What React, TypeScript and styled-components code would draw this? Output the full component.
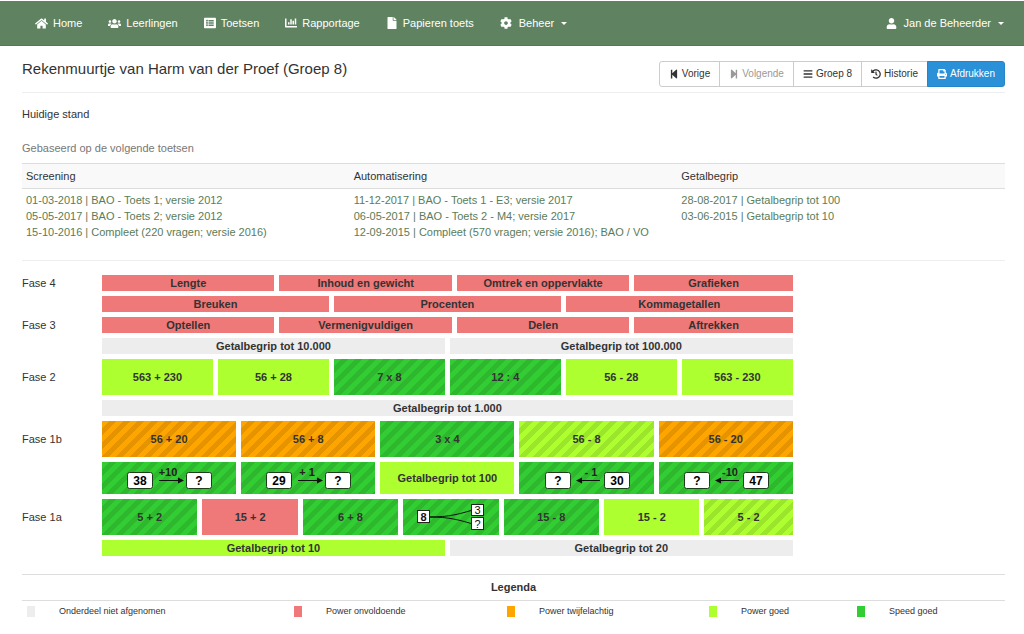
import React from 'react';
import styled, { createGlobalStyle, css } from 'styled-components';
import {
  FaBars, FaChartBar, FaCog, FaFile, FaHistory, FaHome, FaListAlt,
  FaPrint, FaStepBackward, FaStepForward, FaUser, FaUsers,
} from 'react-icons/fa';

const GlobalStyle = createGlobalStyle`
  *, *::before, *::after { box-sizing: border-box; }
  body {
    margin: 0;
    background: #fff;
    color: #333;
    font: 11px/16px "Liberation Sans", Arial, sans-serif;
  }
  h1, h2, p, ul { margin: 0; padding: 0; font-weight: normal; }
  button { font-family: inherit; cursor: pointer; }
`;

const NavBar = styled.nav`
  display: flex;
  align-items: center;
  justify-content: space-between;
  height: 46px;
  padding: 0 20px 0 35px;
  background: #5f8361;
  border-top: 1px solid #fff;
  border-bottom: 1px solid #557657;
`;

const NavList = styled.ul`
  display: flex;
  gap: 26px;
  list-style: none;
`;

const navItem = css`
  display: flex;
  align-items: center;
  gap: 5px;
  padding: 0;
  border: 0;
  background: none;
  color: #fff;
  font-size: 11px;
  line-height: 16px;
  text-decoration: none;
  white-space: nowrap;
`;

const NavLink = styled.a`${navItem}`;
const NavButton = styled.button`
  ${navItem}
  gap: 7px;
`;

const Caret = styled.span`
  border: 3px solid transparent;
  border-top-color: currentColor;
  border-bottom: 0;
`;

const Page = styled.main`
  padding: 0 19px 16px 22px;
`;

const Header = styled.header`
  display: flex;
  justify-content: space-between;
  align-items: flex-start;
  padding: 15px 0 5px;
  border-bottom: 1px solid #eee;
`;

const Title = styled.h1`
  font-size: 15px;
  line-height: 16px;
`;

const ButtonGroup = styled.div`
  display: flex;
`;

const ToolButton = styled.button<{ $primary?: boolean }>`
  display: flex;
  align-items: center;
  gap: 3px;
  height: 26px;
  padding: 0 9px;
  margin-left: -1px;
  border: 1px solid ${p => (p.$primary ? '#2485c7' : '#ccc')};
  background: ${p => (p.$primary ? '#2a90d7' : '#fff')};
  color: ${p => (p.$primary ? '#fff' : '#333')};
  font-size: 10px;
  line-height: 16px;
  &:first-child { border-radius: 3px 0 0 3px; }
  &:last-child { border-radius: 0 3px 3px 0; }
  &:disabled { color: #999; cursor: default; }
`;

const SectionTitle = styled.h2`
  padding-top: 13px;
  font-size: 11px;
`;

const Note = styled.p`
  padding: 18px 0 7px;
  color: #777;
`;

const TestTable = styled.table`
  width: 100%;
  table-layout: fixed;
  border-collapse: separate;
  border-spacing: 0;
  th {
    padding: 4px;
    border: solid #ddd;
    border-width: 1px 0;
    background: #f9f9f9;
    font-weight: normal;
    text-align: left;
  }
  td {
    padding: 3px 4px;
    vertical-align: top;
  }
`;

const TestLink = styled.a`
  display: block;
  color: #5b7c58;
  text-decoration: none;
  white-space: nowrap;
`;

const Wall = styled.section`
  display: flex;
  flex-direction: column;
  gap: 5px;
  margin-top: 17px;
  padding: 14px 0 18px;
  border-top: 1px solid #eee;
`;

const WallRow = styled.div<{ $height: number }>`
  display: grid;
  grid-template-columns: 80px minmax(0, 1fr);
  align-items: center;
  height: ${p => p.$height}px;
`;

const Bricks = styled.div<{ $columns: string }>`
  display: grid;
  grid-template-columns: ${p => p.$columns};
  gap: 5px;
  width: 76.5%;
  height: 100%;
`;

const tones = {
  none: '#ededed',
  bad: '#ef7878',
  doubt: '#ffa500',
  good: '#adff2f',
  speed: '#32cd32',
};
type Tone = keyof typeof tones;

const Brick = styled.div<{ $tone: Tone; $striped?: boolean }>`
  display: flex;
  align-items: center;
  justify-content: center;
  overflow: hidden;
  background-color: ${p => tones[p.$tone]};
  ${p => p.$striped && css`
    background-image: repeating-linear-gradient(
      135deg, transparent 0 5px, rgba(0, 0, 0, 0.1) 5px 10px
    );
  `}
  font-weight: bold;
  white-space: nowrap;
`;

const Drawing = styled.svg`
  display: block;
  flex: none;
  font-weight: bold;
`;

const Legend = styled.section`
  border-top: 1px solid #ddd;
`;

const LegendTitle = styled.h2`
  padding: 4px 0 5px;
  border-bottom: 1px solid #ddd;
  font-size: 11px;
  font-weight: bold;
  text-align: center;
`;

const LegendList = styled.ul`
  display: grid;
  grid-template-columns: 267fr 213fr 202fr 148fr 153fr;
  padding-top: 2px;
  list-style: none;
`;

const LegendItem = styled.li`
  display: flex;
  align-items: center;
  gap: 24px;
  padding-left: 5px;
  font-size: 9px;
  white-space: nowrap;
`;

const Swatch = styled.span<{ $tone: Tone }>`
  width: 8px;
  height: 11px;
  background: ${p => tones[p.$tone]};
`;

/* Two number boxes joined by a labelled arrow. */
function Jump({ left, right, step, back }: { left: string; right: string; step: string; back?: boolean }) {
  return (
    <Drawing width="88" height="32" viewBox="-2 0 88 32" textAnchor="middle">
      <g fill="#fff" stroke="#1d3d1d">
        <rect x="0.5" y="10.5" width="25" height="16" rx="2" />
        <rect x="59.5" y="10.5" width="25" height="16" rx="2" />
      </g>
      <path d={back ? 'M55 18.5H35' : 'M32 18.5H52'} stroke="#111" />
      <path d={back ? 'M31 18.5l6-3v6z' : 'M57 18.5l-6-3v6z'} fill="#111" />
      <text x="13" y="23" fontSize="12" fill="#000">{left}</text>
      <text x="72" y="23" fontSize="12" fill="#000">{right}</text>
      <text x={back ? 46 : 41} y="14" fontSize="11" fill="#222">{step}</text>
    </Drawing>
  );
}

/* One number that splits into two parts. */
function Split() {
  return (
    <Drawing width="68" height="36" viewBox="0 0 68 36" textAnchor="middle" fontSize="11">
      <path d="M13 18C32 18 42 15 54 11.5M13 18C32 18 42 21 54 24.5" fill="none" stroke="#111" />
      <g fill="#fff" stroke="#222">
        <rect x="0.5" y="11.5" width="12" height="12" />
        <rect x="54.5" y="5.5" width="12" height="11" />
        <rect x="54.5" y="18.5" width="12" height="12" />
      </g>
      <g fill="#111">
        <text x="6.5" y="21.5">8</text>
        <text x="60.5" y="15" fontWeight="normal">3</text>
        <text x="60.5" y="28.5" fontWeight="normal">?</text>
      </g>
    </Drawing>
  );
}

type BrickData = [React.ReactNode, Tone, boolean?];
interface RowData { label?: string; height: number; columns: string; bricks: BrickData[] }

const quarters = '172fr 172fr 172fr 158fr';
const equal = (n: number) => `repeat(${n}, minmax(0, 1fr))`;

const rows: RowData[] = [
  { label: 'Fase 4', height: 16, columns: quarters, bricks: [['Lengte', 'bad'], ['Inhoud en gewicht', 'bad'], ['Omtrek en oppervlakte', 'bad'], ['Grafieken', 'bad']] },
  { height: 16, columns: equal(3), bricks: [['Breuken', 'bad'], ['Procenten', 'bad'], ['Kommagetallen', 'bad']] },
  { label: 'Fase 3', height: 16, columns: quarters, bricks: [['Optellen', 'bad'], ['Vermenigvuldigen', 'bad'], ['Delen', 'bad'], ['Aftrekken', 'bad']] },
  { height: 16, columns: equal(2), bricks: [['Getalbegrip tot 10.000', 'none'], ['Getalbegrip tot 100.000', 'none']] },
  { label: 'Fase 2', height: 36, columns: equal(6), bricks: [['563 + 230', 'good'], ['56 + 28', 'good'], ['7 x 8', 'speed', true], ['12 : 4', 'speed', true], ['56 - 28', 'good'], ['563 - 230', 'good']] },
  { height: 16, columns: equal(1), bricks: [['Getalbegrip tot 1.000', 'none']] },
  { label: 'Fase 1b', height: 36, columns: equal(5), bricks: [['56 + 20', 'doubt', true], ['56 + 8', 'doubt', true], ['3 x 4', 'speed', true], ['56 - 8', 'good', true], ['56 - 20', 'doubt', true]] },
  {
    height: 32,
    columns: equal(5),
    bricks: [
      [<Jump left="38" right="?" step="+10" />, 'speed', true],
      [<Jump left="29" right="?" step="+ 1" />, 'speed', true],
      ['Getalbegrip tot 100', 'good'],
      [<Jump left="?" right="30" step="- 1" back />, 'speed', true],
      [<Jump left="?" right="47" step="-10" back />, 'speed', true],
    ],
  },
  { label: 'Fase 1a', height: 36, columns: 'repeat(6, 95fr) 88fr', bricks: [['5 + 2', 'speed', true], ['15 + 2', 'bad'], ['6 + 8', 'speed', true], [<Split />, 'speed', true], ['15 - 8', 'speed', true], ['15 - 2', 'good'], ['5 - 2', 'good', true]] },
  { height: 16, columns: equal(2), bricks: [['Getalbegrip tot 10', 'good'], ['Getalbegrip tot 20', 'none']] },
];

const tests = [
  { name: 'Screening', items: ['01-03-2018 | BAO - Toets 1; versie 2012', '05-05-2017 | BAO - Toets 2; versie 2012', '15-10-2016 | Compleet (220 vragen; versie 2016)'] },
  { name: 'Automatisering', items: ['11-12-2017 | BAO - Toets 1 - E3; versie 2017', '06-05-2017 | BAO - Toets 2 - M4; versie 2017', '12-09-2015 | Compleet (570 vragen; versie 2016); BAO / VO'] },
  { name: 'Getalbegrip', items: ['28-08-2017 | Getalbegrip tot 100', '03-06-2015 | Getalbegrip tot 10'] },
];

const legend: [string, Tone][] = [
  ['Onderdeel niet afgenomen', 'none'],
  ['Power onvoldoende', 'bad'],
  ['Power twijfelachtig', 'doubt'],
  ['Power goed', 'good'],
  ['Speed goed', 'speed'],
];

export default function App() {
  return (
    <>
      <GlobalStyle />
      <NavBar>
        <NavList>
          <li><NavLink href="#home"><FaHome size={13} />Home</NavLink></li>
          <li><NavLink href="#leerlingen"><FaUsers size={13} />Leerlingen</NavLink></li>
          <li><NavLink href="#toetsen"><FaListAlt size={12} />Toetsen</NavLink></li>
          <li><NavLink href="#rapportage"><FaChartBar size={12} />Rapportage</NavLink></li>
          <li><NavLink href="#papier"><FaFile size={12} />Papieren toets</NavLink></li>
          <li><NavButton type="button"><FaCog size={12} />Beheer<Caret /></NavButton></li>
        </NavList>
        <NavButton type="button"><FaUser size={11} />Jan de Beheerder<Caret /></NavButton>
      </NavBar>
      <Page>
        <Header>
          <Title>Rekenmuurtje van Harm van der Proef (Groep 8)</Title>
          <ButtonGroup>
            <ToolButton type="button"><FaStepBackward size={10} />Vorige</ToolButton>
            <ToolButton type="button" disabled><FaStepForward size={10} />Volgende</ToolButton>
            <ToolButton type="button"><FaBars size={10} />Groep 8</ToolButton>
            <ToolButton type="button"><FaHistory size={10} />Historie</ToolButton>
            <ToolButton type="button" $primary><FaPrint size={10} />Afdrukken</ToolButton>
          </ButtonGroup>
        </Header>
        <SectionTitle>Huidige stand</SectionTitle>
        <Note>Gebaseerd op de volgende toetsen</Note>
        <TestTable>
          <thead>
            <tr>{tests.map(t => <th key={t.name} scope="col">{t.name}</th>)}</tr>
          </thead>
          <tbody>
            <tr>
              {tests.map(t => (
                <td key={t.name}>
                  {t.items.map(item => <TestLink key={item} href="#toets">{item}</TestLink>)}
                </td>
              ))}
            </tr>
          </tbody>
        </TestTable>
        <Wall>
          {rows.map((row, i) => (
            <WallRow key={i} $height={row.height}>
              <span>{row.label}</span>
              <Bricks $columns={row.columns}>
                {row.bricks.map(([content, tone, striped], j) => (
                  <Brick key={j} $tone={tone} $striped={striped}>{content}</Brick>
                ))}
              </Bricks>
            </WallRow>
          ))}
        </Wall>
        <Legend>
          <LegendTitle>Legenda</LegendTitle>
          <LegendList>
            {legend.map(([text, tone]) => (
              <LegendItem key={text}><Swatch $tone={tone} />{text}</LegendItem>
            ))}
          </LegendList>
        </Legend>
      </Page>
    </>
  );
}
